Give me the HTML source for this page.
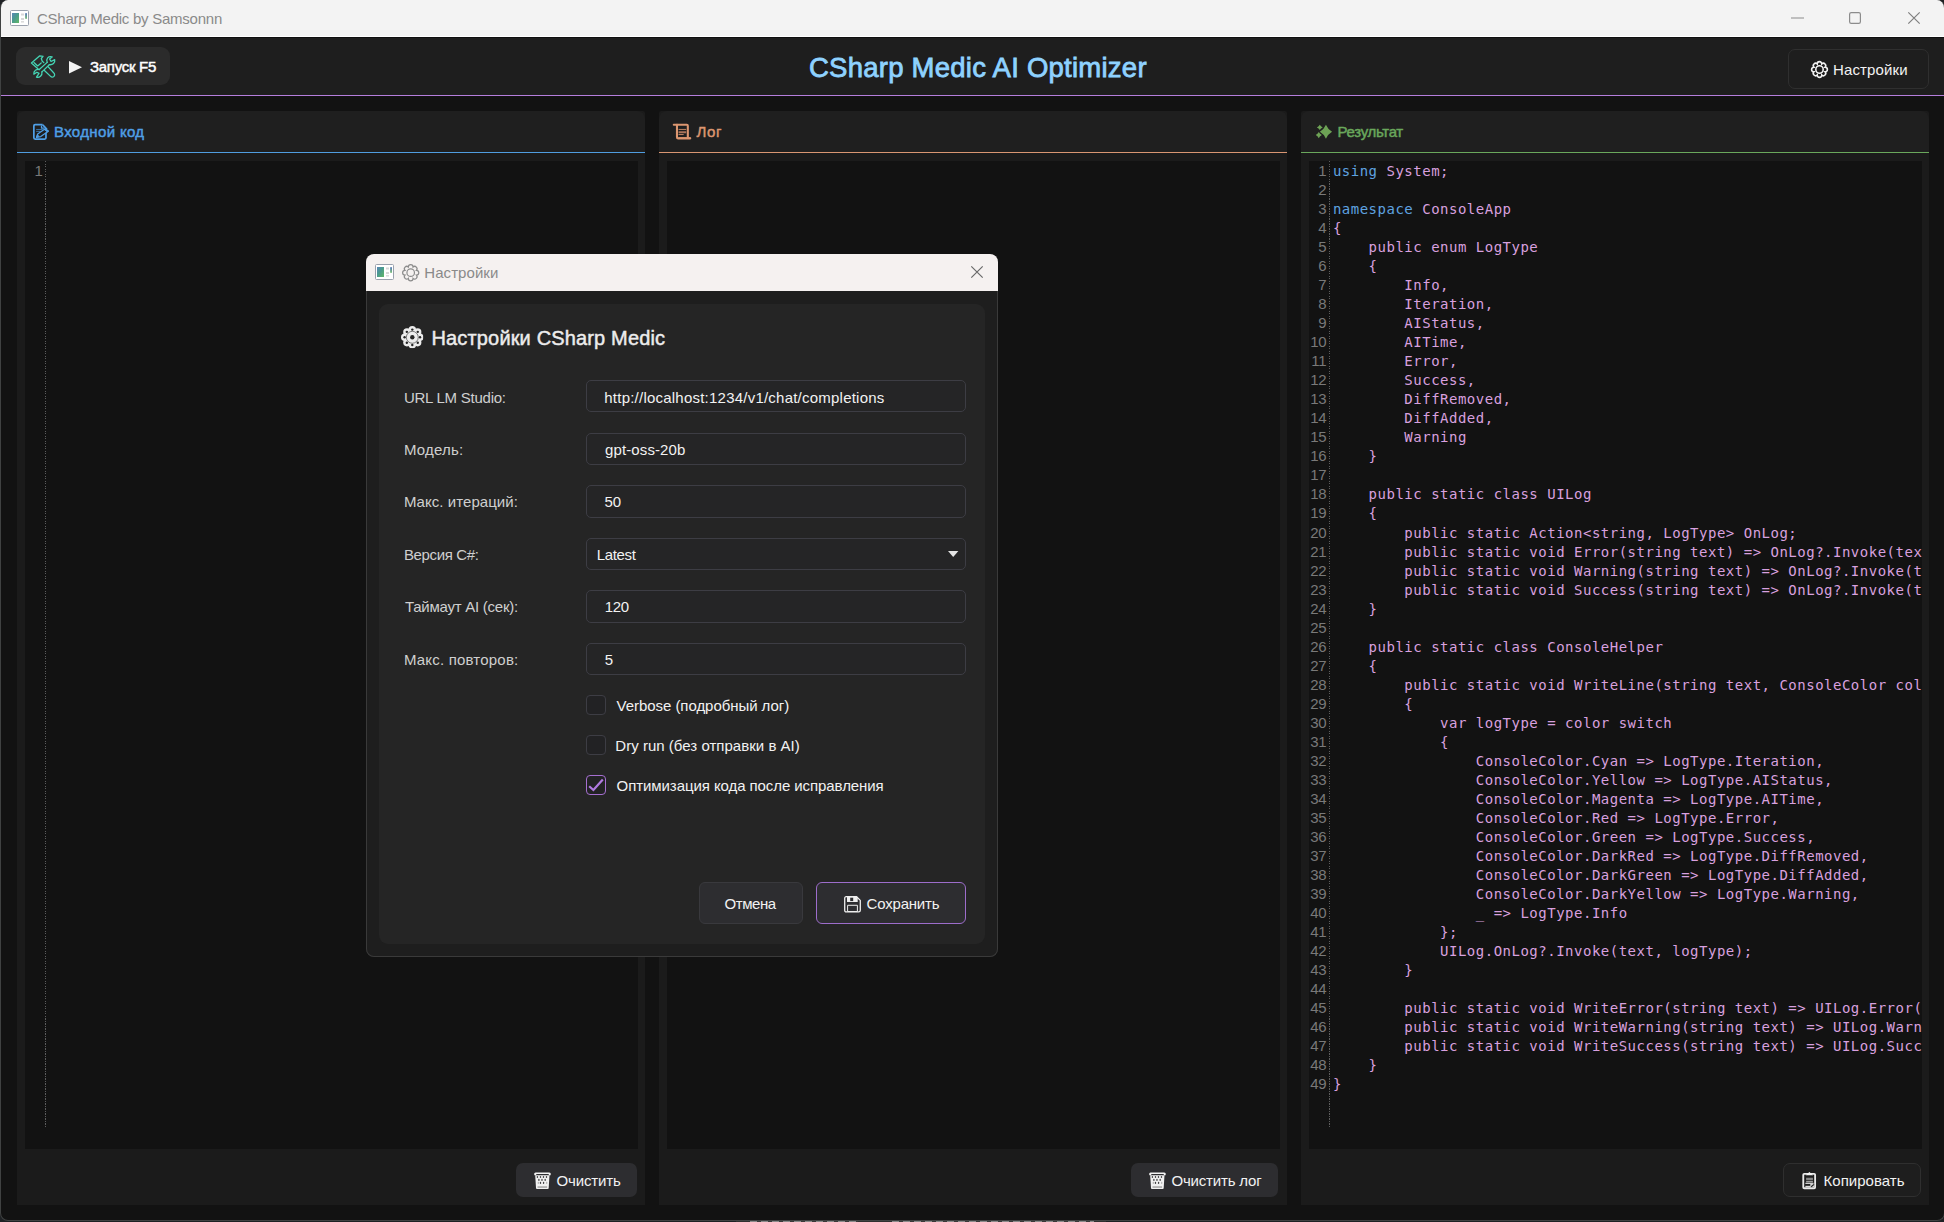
<!DOCTYPE html>
<html lang="ru">
<head>
<meta charset="utf-8">
<title>CSharp Medic by Samsonnn</title>
<style>
*{box-sizing:border-box;margin:0;padding:0}
html,body{width:1944px;height:1222px;overflow:hidden;background:#1e2124;font-family:"Liberation Sans",sans-serif;}
.t{position:absolute;white-space:nowrap;line-height:20px;height:20px;font-size:15px;color:#f2f2f2}
.sb{-webkit-text-stroke:0.45px currentColor}
svg{position:absolute;overflow:visible}
#win{position:absolute;left:0;top:0;width:1945px;height:1221px;background:#121212;border:1px solid #404242;border-top:none;border-radius:8px;overflow:hidden}
#tb{position:absolute;left:0;top:0;width:100%;height:37px;background:#f3f3f3;border-bottom:1px solid #fff}
#hdr{position:absolute;left:0;top:37px;width:100%;height:59px;background:#1e1e1e;border-top:1px solid #0f0f0f;border-bottom:1.5px solid #b57edc}
.panel{position:absolute;top:111px;width:628px;height:1094px;background:#1b1b1b;border-radius:2px 2px 0 0;overflow:hidden}
.ph{position:absolute;left:0;top:0;width:100%;height:42px;background:#1f1f1f;border-radius:8px 8px 0 0;border-bottom:1.5px solid #5b9bd5}
.ed{position:absolute;left:8px;top:50px;width:613px;height:988px;background:#121212;overflow:hidden}
.btn{position:absolute;background:#2d2d30;border-radius:7px}
.btno{position:absolute;background:#1e1e1e;border:1px solid #2f2f2f;border-radius:7px}
.ln{position:absolute;top:0;color:#797979;font-size:15px;line-height:19px;text-align:right;white-space:pre;letter-spacing:-0.3px}
.dots{position:absolute;top:0;width:1px;background:repeating-linear-gradient(to bottom,#5c5c5c 0,#5c5c5c 1px,transparent 1px,transparent 2.5px)}
pre.code{position:absolute;font-family:"DejaVu Sans Mono","Liberation Mono",monospace;font-size:14px;letter-spacing:0.502px;line-height:19px;color:#d8a0df;white-space:pre}
pre.code b{font-weight:normal;color:#5fa3e0}
/* dialog */
#dlg{position:absolute;left:366px;top:254px;width:632px;height:703px;background:#1e1e1e;border-radius:8px;overflow:hidden;box-shadow:0 0 0 1px #3a3a3a inset}
#dtb{position:absolute;left:0;top:0;width:100%;height:37px;background:#f5f1f0}
#dpn{position:absolute;left:13px;top:50px;width:606px;height:640px;background:#252525;border-radius:9px}
.inp{position:absolute;left:220px;width:380px;height:32px;border:1px solid #3d3d44;border-radius:5px;background:#252526}
.cb{position:absolute;left:220px;width:20px;height:20px;border:1px solid #3d3d44;border-radius:4px;background:#222224}
.lb{color:#cfcfcf}
</style>
</head>
<body>
<div id="win">
  <div id="tb">
    <svg id="ic_app" style="left:9px;top:10px" width="19" height="16" viewBox="0 0 19 16">
      <defs><linearGradient id="gapp" x1="0" y1="0" x2="1" y2="1"><stop offset="0" stop-color="#5a86b8"/><stop offset="0.45" stop-color="#4a9a8e"/><stop offset="1" stop-color="#62b866"/></linearGradient>
      <linearGradient id="gbar" x1="0" y1="0" x2="0" y2="1"><stop offset="0" stop-color="#2a52a8"/><stop offset="1" stop-color="#58b050"/></linearGradient></defs>
      <rect x="0.5" y="0.5" width="18" height="15" rx="1" fill="#fff" stroke="#9aa1ad"/>
      <rect x="2" y="3" width="7" height="10" fill="url(#gapp)"/>
      <rect x="11" y="3.5" width="3" height="2" fill="#d8d8d8"/><rect x="11" y="8" width="3" height="2" fill="#d8d8d8"/><rect x="11" y="11" width="3" height="1.6" fill="#dcdcdc"/>
      <rect x="15.3" y="3" width="1.5" height="6" rx="0.7" fill="url(#gbar)"/>
    </svg>
    <div class="t" id="t_tb" style="left:36.0px;top:8.6px;color:#8a8a8a;letter-spacing:-0.248px">CSharp Medic by Samsonnn</div>
    <svg id="ic_min" style="left:1790px;top:17px" width="13" height="2" viewBox="0 0 13 2"><path d="M0 1H13" stroke="#8c8c8c" stroke-width="1.2"/></svg>
    <svg id="ic_max" style="left:1848px;top:12px" width="12" height="12" viewBox="0 0 12 12"><rect x="0.6" y="0.6" width="10.8" height="10.8" rx="1.6" fill="none" stroke="#8c8c8c" stroke-width="1.2"/></svg>
    <svg id="ic_cls" style="left:1907px;top:12px" width="12" height="12" viewBox="0 0 12 12"><path d="M0.3 0.3L11.7 11.7M11.7 0.3L0.3 11.7" stroke="#7f7f7f" stroke-width="1.2"/></svg>
  </div>
  <div id="hdr"></div>
  <div class="btn" id="b_run" style="left:15px;top:47px;width:154px;height:38px;border-radius:9px;background:#2b2b2b"></div>
  <svg id="ic_tools" style="left:25px;top:50px" width="36" height="34" viewBox="0 0 1294 1222" fill="none" stroke="#45d4b4" stroke-width="46" stroke-linejoin="round" stroke-linecap="round">
    <path d="M640 455L580 395L550 305L612 228L495 208L195 470L430 672"/>
    <path d="M285 452L420 572L545 465"/>
    <path d="M790 598L1002 826A78 78 0 0 1 884 948L662 738"/>
    <path d="M762 445C710 310 800 215 940 248L848 325L900 415L1030 345C1062 465 950 545 838 528"/>
    <path d="M762 445L476 702M838 528L572 786"/>
    <path d="M476 702C390 676 262 745 282 868L392 800L468 838L376 975C480 1010 596 920 572 786"/>
  </svg>
  <svg id="ic_play" style="left:67.5px;top:60.5px" width="13" height="13" viewBox="0 0 13 13"><path d="M0 0L13 6.3L0 12.6Z" fill="#f4f4f4"/></svg>
  <div class="t sb" id="t_run" style="left:89.0px;top:56.7px;letter-spacing:-0.287px;color:#fff">Запуск F5</div>
  <div class="t sb" id="t_title" style="left:808.0px;top:50.8px;font-size:27.5px;line-height:34px;height:34px;color:#8ed2ff;-webkit-text-stroke:0.8px #8ed2ff;letter-spacing:0.246px">CSharp Medic AI Optimizer</div>
  <div class="btno" id="b_set" style="left:1787px;top:49px;width:141px;height:40px;border-radius:7px"></div>
  <svg class="gear" id="ic_gear1" style="left:1809.9px;top:61.3px" width="17" height="17" viewBox="-9 -9 18 18"><use href="#gearsym2" color="#f2f2f2" stroke-width="1.7"/></svg>
  <div class="t" id="t_set" style="left:1832.0px;top:59.5px;letter-spacing:0.125px">Настройки</div>

  <!-- panel 1 -->
  <div class="panel" id="p1" style="left:16px">
    <div class="ph" style="border-bottom-color:#509de0"></div>
    <svg id="ic_memo" style="left:11px;top:8px" width="26" height="26" viewBox="0 0 1222 1222" fill="none" stroke="#4f9fe6" stroke-width="82" stroke-linejoin="round">
      <path d="M690 270H335Q275 270 275 330V885Q275 945 335 945H785Q845 945 845 885V650"/>
      <path d="M690 270L890 490"/>
      <path d="M635 300V425H750" stroke-width="60"/>
      <path d="M385 492H690M385 582H590" stroke-width="42" stroke="#3f7fb8"/>
      <path d="M400 860L455 705L810 455L955 570L600 825Z" stroke-width="58"/>
      <path d="M760 490L815 450L965 565L905 610Z" fill="#4f9fe6" stroke-width="40"/>
      <path d="M400 860L445 740L525 815Z" fill="#4f9fe6" stroke-width="30"/>
    </svg>
    <div class="t sb" id="t_p1" style="left:37.0px;top:10.5px;color:#4f9fe6;letter-spacing:0.350px">Входной код</div>
    <div class="ed" id="ed1">
      <div class="ln" id="ln1" style="left:0;width:17.5px;top:-0.2px">1</div>
      <div class="dots" style="left:20px;height:966px"></div>
    </div>
    <div class="btn" id="b_clr1" style="left:499px;top:1052px;width:121px;height:34px"></div>
    <svg id="ic_tr1" style="left:512px;top:1056px" width="26" height="26" viewBox="0 0 1222 1222"><use href="#trashsym"/></svg>
    <div class="t" id="t_clr1" style="left:539.5px;top:1059.6px;letter-spacing:-0.129px">Очистить</div>
  </div>
  <!-- panel 2 -->
  <div class="panel" id="p2" style="left:658px">
    <div class="ph" style="border-bottom-color:#d99672"></div>
    <svg id="ic_scroll" style="left:10px;top:8px" width="26" height="26" viewBox="0 0 1222 1222" fill="none" stroke="#dc9670" stroke-width="98" stroke-linejoin="round" stroke-linecap="round">
      <path d="M225 272H835Q885 272 885 322V850"/>
      <path d="M375 272V855Q375 910 430 910H1000"/>
      <path d="M470 890H990" stroke-width="70"/>
      <path d="M450 490H810M450 730H690" stroke-width="44" stroke-linecap="butt" stroke="#c98a68"/>
      <path d="M450 622H810" stroke-width="96" stroke-linecap="butt" stroke="#a8735a"/>
    </svg>
    <div class="t sb" id="t_p2" style="left:37.6px;top:10.5px;color:#dc9670;letter-spacing:0.55px">Лог</div>
    <div class="ed" id="ed2"></div>
    <div class="btn" id="b_clr2" style="left:472px;top:1052px;width:147px;height:34px"></div>
    <svg id="ic_tr2" style="left:485px;top:1056px" width="26" height="26" viewBox="0 0 1222 1222"><use href="#trashsym"/></svg>
    <div class="t" id="t_clr2" style="left:512.5px;top:1059.6px;letter-spacing:-0.191px">Очистить лог</div>
  </div>
  <!-- panel 3 -->
  <div class="panel" id="p3" style="left:1300px">
    <div class="ph" style="border-bottom-color:#6aa85c"></div>
    <svg id="ic_spark" style="left:11px;top:9px" width="24" height="24" viewBox="0 0 1222 1222" fill="#6da255">
      <path d="M710 248Q813 487 1022 604Q813 721 710 960Q607 721 398 604Q607 487 710 248Z"/>
      <path d="M397 248Q450 332 545 380Q450 428 397 512Q344 428 249 380Q344 332 397 248Z"/>
      <path d="M345 608Q402 712 502 770Q402 828 345 932Q288 828 188 770Q288 712 345 608Z"/>
    </svg>
    <div class="t sb" id="t_p3" style="left:36.5px;top:10.5px;color:#6aa85c;letter-spacing:-0.312px">Результат</div>
    <div class="ed" id="ed3">
      <div class="ln" id="ln3" style="left:0;width:17.3px;top:-0.2px">1
2
3
4
5
6
7
8
9
10
11
12
13
14
15
16
17
18
19</div>
      <div class="ln" id="ln3b" style="left:0;width:17.3px;top:361.8px">20
21
22
23
24
25
26
27
28
29
30
31
32
33
34
35
36
37
38
39
40
41
42
43
44
45
46
47
48
49</div>
      <div class="dots" style="left:19.5px;height:966px"></div>
      <pre class="code" id="code" style="left:23.9px;top:1px"><b>using</b> System;

<b>namespace</b> ConsoleApp
{
    public enum LogType
    {
        Info,
        Iteration,
        AIStatus,
        AITime,
        Error,
        Success,
        DiffRemoved,
        DiffAdded,
        Warning
    }

    public static class UILog
    {</pre>
      <pre class="code" id="code2" style="left:23.9px;top:363px">        public static Action&lt;string, LogType&gt; OnLog;
        public static void Error(string text) =&gt; OnLog?.Invoke(text, LogType.Error);
        public static void Warning(string text) =&gt; OnLog?.Invoke(text, LogType.Warning);
        public static void Success(string text) =&gt; OnLog?.Invoke(text, LogType.Success);
    }

    public static class ConsoleHelper
    {
        public static void WriteLine(string text, ConsoleColor color)
        {
            var logType = color switch
            {
                ConsoleColor.Cyan =&gt; LogType.Iteration,
                ConsoleColor.Yellow =&gt; LogType.AIStatus,
                ConsoleColor.Magenta =&gt; LogType.AITime,
                ConsoleColor.Red =&gt; LogType.Error,
                ConsoleColor.Green =&gt; LogType.Success,
                ConsoleColor.DarkRed =&gt; LogType.DiffRemoved,
                ConsoleColor.DarkGreen =&gt; LogType.DiffAdded,
                ConsoleColor.DarkYellow =&gt; LogType.Warning,
                _ =&gt; LogType.Info
            };
            UILog.OnLog?.Invoke(text, logType);
        }

        public static void WriteError(string text) =&gt; UILog.Error(text);
        public static void WriteWarning(string text) =&gt; UILog.Warning(text);
        public static void WriteSuccess(string text) =&gt; UILog.Success(text);
    }
}</pre>
    </div>
    <div class="btno" id="b_copy" style="left:482px;top:1052px;width:138px;height:34px"></div>
    <svg id="ic_clip" style="left:495px;top:1056px" width="26" height="26" viewBox="0 0 1222 1222"><use href="#clipsym"/></svg>
    <div class="t" id="t_copy" style="left:522.5px;top:1059.6px;letter-spacing:0.033px">Копировать</div>
  </div>
</div>
<div style="position:absolute;left:736px;top:1221px;width:370px;height:1px;background:#303030"></div>
<div style="position:absolute;left:750px;top:1221px;width:108px;height:1px;background:repeating-linear-gradient(to right,#8c8c8c 0,#8c8c8c 7px,#3a3a3a 7px,#3a3a3a 11px)"></div>
<div style="position:absolute;left:892px;top:1221px;width:202px;height:1px;background:repeating-linear-gradient(to right,#8c8c8c 0,#8c8c8c 7px,#3a3a3a 7px,#3a3a3a 11px)"></div>
<svg width="0" height="0" style="position:absolute">
  <defs>
    <mask id="gearmask" maskUnits="userSpaceOnUse" x="-9" y="-9" width="18" height="18"><g fill="#fff"><circle r="6.4"/><circle cx="0.00" cy="-6.00" r="3"/><circle cx="4.24" cy="-4.24" r="3"/><circle cx="6.00" cy="-0.00" r="3"/><circle cx="4.24" cy="4.24" r="3"/><circle cx="0.00" cy="6.00" r="3"/><circle cx="-4.24" cy="4.24" r="3"/><circle cx="-6.00" cy="0.00" r="3"/><circle cx="-4.24" cy="-4.24" r="3"/></g><g fill="#000"><circle r="1.75"/><circle cx="0.00" cy="-6.15" r="0.95"/><circle cx="4.35" cy="-4.35" r="0.95"/><circle cx="6.15" cy="-0.00" r="0.95"/><circle cx="4.35" cy="4.35" r="0.95"/><circle cx="0.00" cy="6.15" r="0.95"/><circle cx="-4.35" cy="4.35" r="0.95"/><circle cx="-6.15" cy="0.00" r="0.95"/><circle cx="-4.35" cy="-4.35" r="0.95"/></g><circle r="4.75" fill="none" stroke="#000" stroke-width="0.45"/></mask>
    <g id="gearsym"><rect x="-9" y="-9" width="18" height="18" fill="currentColor" mask="url(#gearmask)"/></g>
    <g id="gearsym2" fill="none" stroke="currentColor"><path d="M-2.45 -5.91A2.45 2.45 0 0 1 2.45 -5.91A2.45 2.45 0 0 1 5.91 -2.45A2.45 2.45 0 0 1 5.91 2.45A2.45 2.45 0 0 1 2.45 5.91A2.45 2.45 0 0 1 -2.45 5.91A2.45 2.45 0 0 1 -5.91 2.45A2.45 2.45 0 0 1 -5.91 -2.45A2.45 2.45 0 0 1 -2.45 -5.91Z"/><circle r="3.9"/></g>
    <g id="trashsym">
      <rect x="240" y="255" width="785" height="150" rx="72" fill="#f4f4f4"/>
      <rect x="335" y="325" width="600" height="50" rx="25" fill="#2d2d30"/>
      <path d="M292 400H963L925 1000Q920 1037 880 1037H375Q335 1037 330 1000Z" fill="#f1f1f1"/>
      <ellipse cx="395" cy="470" rx="33" ry="52" fill="#2d2d30" opacity="0.9"/><ellipse cx="540" cy="470" rx="33" ry="52" fill="#2d2d30" opacity="0.9"/><ellipse cx="680" cy="470" rx="33" ry="52" fill="#2d2d30" opacity="0.9"/><ellipse cx="822" cy="470" rx="33" ry="52" fill="#2d2d30" opacity="0.9"/><ellipse cx="465" cy="610" rx="33" ry="52" fill="#2d2d30" opacity="0.9"/><ellipse cx="610" cy="610" rx="33" ry="52" fill="#2d2d30" opacity="0.9"/><ellipse cx="760" cy="610" rx="33" ry="52" fill="#2d2d30" opacity="0.9"/><ellipse cx="540" cy="750" rx="33" ry="52" fill="#2d2d30" opacity="0.9"/><ellipse cx="685" cy="750" rx="33" ry="52" fill="#2d2d30" opacity="0.9"/><ellipse cx="440" cy="750" rx="33" ry="52" fill="#2d2d30" opacity="0.3"/><ellipse cx="830" cy="750" rx="33" ry="52" fill="#2d2d30" opacity="0.3"/>
      <rect x="400" y="905" width="450" height="75" fill="#a9a9a9"/>
    </g>
    <g id="clipsym">
      <rect x="342" y="322" width="556" height="676" rx="45" fill="none" stroke="#e9e9e9" stroke-width="86"/>
      <path d="M455 385L560 295L630 235L700 295L805 385Z" fill="#f4f4f4"/>
      <rect x="475" y="505" width="320" height="118" fill="#858585"/>
      <rect x="475" y="655" width="320" height="68" fill="#9c9c9c"/>
      <rect x="440" y="742" width="380" height="52" fill="#e2e2e2"/>
      <rect x="440" y="885" width="240" height="70" fill="#d9d9d9"/>
      <path d="M670 790H850V950H670Z" fill="#d6d6d6"/>
      <path d="M715 925L845 815" stroke="#1e1e1e" stroke-width="55"/>
    </g>
  </defs>
</svg>
<div id="dlg">
  <div id="dtb">
    <svg id="ic_app2" style="left:9px;top:10px" width="19" height="16" viewBox="0 0 19 16">
      <rect x="0.5" y="0.5" width="18" height="15" rx="1" fill="#fff" stroke="#9aa1ad"/>
      <rect x="2" y="3" width="7" height="10" fill="url(#gapp)"/>
      <rect x="11" y="3.5" width="3" height="2" fill="#d8d8d8"/><rect x="11" y="8" width="3" height="2" fill="#d8d8d8"/><rect x="11" y="11" width="3" height="1.6" fill="#dcdcdc"/>
      <rect x="15.3" y="3" width="1.5" height="6" rx="0.7" fill="url(#gbar)"/>
    </svg>
    <svg id="ic_gear2" style="left:35.5px;top:10px" width="17.4" height="17.4" viewBox="-9 -9 18 18"><use href="#gearsym2" color="#8c8c8c" stroke-width="1.25"/></svg>
    <div class="t" id="t_dtb" style="left:58.3px;top:8.6px;color:#8a8a8a;letter-spacing:0.063px">Настройки</div>
    <svg id="ic_cls2" style="left:605px;top:12px" width="12" height="12" viewBox="0 0 12 12"><path d="M0.3 0.3L11.7 11.7M11.7 0.3L0.3 11.7" stroke="#6a6a6a" stroke-width="1.2"/></svg>
  </div>
  <div id="dpn"></div>
  <svg id="ic_gear3" style="left:35.2px;top:72.3px" width="22.6" height="22.6" viewBox="-9 -9 18 18"><use href="#gearsym" color="#ececec"/></svg>
  <div class="t sb" id="t_dh" style="left:65.5px;top:71.3px;font-size:20px;line-height:26px;height:26px;color:#ececec;letter-spacing:0.152px">Настройки CSharp Medic</div>

  <div class="t lb" id="l1" style="left:37.9px;top:133.8px;letter-spacing:-0.246px">URL LM Studio:</div>
  <div class="inp" style="top:126px;height:32px"></div>
  <div class="t" id="v1" style="left:238.3px;top:133.8px;letter-spacing:0.225px">http://localhost:1234/v1/chat/completions</div>

  <div class="t lb" id="l2" style="left:37.9px;top:185.8px;letter-spacing:0.200px">Модель:</div>
  <div class="inp" style="top:179px;height:32px"></div>
  <div class="t" id="v2" style="left:239.1px;top:185.8px;letter-spacing:0.100px">gpt-oss-20b</div>

  <div class="t lb" id="l3" style="left:37.9px;top:237.8px;letter-spacing:0.057px">Макс. итераций:</div>
  <div class="inp" style="top:231px;height:33px"></div>
  <div class="t" id="v3" style="left:238.6px;top:237.8px;letter-spacing:-0.2px">50</div>

  <div class="t lb" id="l4" style="left:37.9px;top:290.8px;letter-spacing:-0.344px">Версия C#:</div>
  <div class="inp" style="top:284px;height:32px"></div>
  <div class="t" id="v4" style="left:230.8px;top:290.8px;letter-spacing:-0.360px">Latest</div>
  <svg id="ic_arr" style="left:582px;top:296.6px" width="10.4" height="6" viewBox="0 0 10.4 6"><path d="M0 0H10.4L5.2 6Z" fill="#e4e4e4"/></svg>

  <div class="t lb" id="l5" style="left:38.9px;top:342.8px;letter-spacing:-0.238px">Таймаут AI (сек):</div>
  <div class="inp" style="top:336px;height:33px"></div>
  <div class="t" id="v5" style="left:238.8px;top:342.8px;letter-spacing:-0.400px">120</div>

  <div class="t lb" id="l6" style="left:37.9px;top:395.8px;letter-spacing:0.200px">Макс. повторов:</div>
  <div class="inp" style="top:389px;height:32px"></div>
  <div class="t" id="v6" style="left:238.8px;top:395.8px;letter-spacing:0px">5</div>

  <div class="cb" style="top:441px"></div>
  <div class="t" id="c1" style="left:250.6px;top:442px;letter-spacing:-0.050px">Verbose (подробный лог)</div>
  <div class="cb" style="top:481px"></div>
  <div class="t" id="c2" style="left:249.3px;top:482px;letter-spacing:0.023px">Dry run (без отправки в AI)</div>
  <div class="cb" style="top:521px;border-color:#a56fd0;border-width:1.5px"></div>
  <svg id="ic_chk" style="left:222px;top:524px" width="16" height="14" viewBox="0 0 16 14"><path d="M1.2 8.2L5.4 12L14.8 1.4" fill="none" stroke="#b07ae0" stroke-width="2.2"/></svg>
  <div class="t" id="c3" style="left:250.6px;top:521.8px;letter-spacing:-0.076px">Оптимизация кода после исправления</div>

  <div class="btn" id="b_cancel" style="left:333px;top:628px;width:104px;height:42px;border:1px solid #39393d;border-radius:6px"></div>
  <div class="t" id="t_cancel" style="left:358.6px;top:639.6px;letter-spacing:-0.440px">Отмена</div>
  <div class="btn" id="b_save" style="left:449.6px;top:628px;width:150px;height:42px;border:1.5px solid #9d6dcb;border-radius:6px"></div>
  <svg id="ic_save" style="left:478.1px;top:641.5px" width="17" height="16.6" viewBox="0 0 17 16.6" fill="none" stroke="#efefef" stroke-width="1.3" stroke-linejoin="round">
    <path d="M2.3 0.7H12.6L16.3 4.4V14.3Q16.3 15.9 14.7 15.9H2.3Q0.7 15.9 0.7 14.3V2.3Q0.7 0.7 2.3 0.7Z"/>
    <rect x="3" y="0.9" width="10.7" height="5.1" fill="#efefef" stroke="none"/>
    <rect x="6.2" y="1.7" width="3" height="3.4" fill="#2d2d30" stroke="none"/>
    <rect x="3.6" y="9.3" width="9.8" height="6.2" stroke-width="1"/>
  </svg>
  <div class="t" id="t_save" style="left:500.6px;top:639.6px;letter-spacing:-0.200px">Сохранить</div>
</div>

</body>
</html>
